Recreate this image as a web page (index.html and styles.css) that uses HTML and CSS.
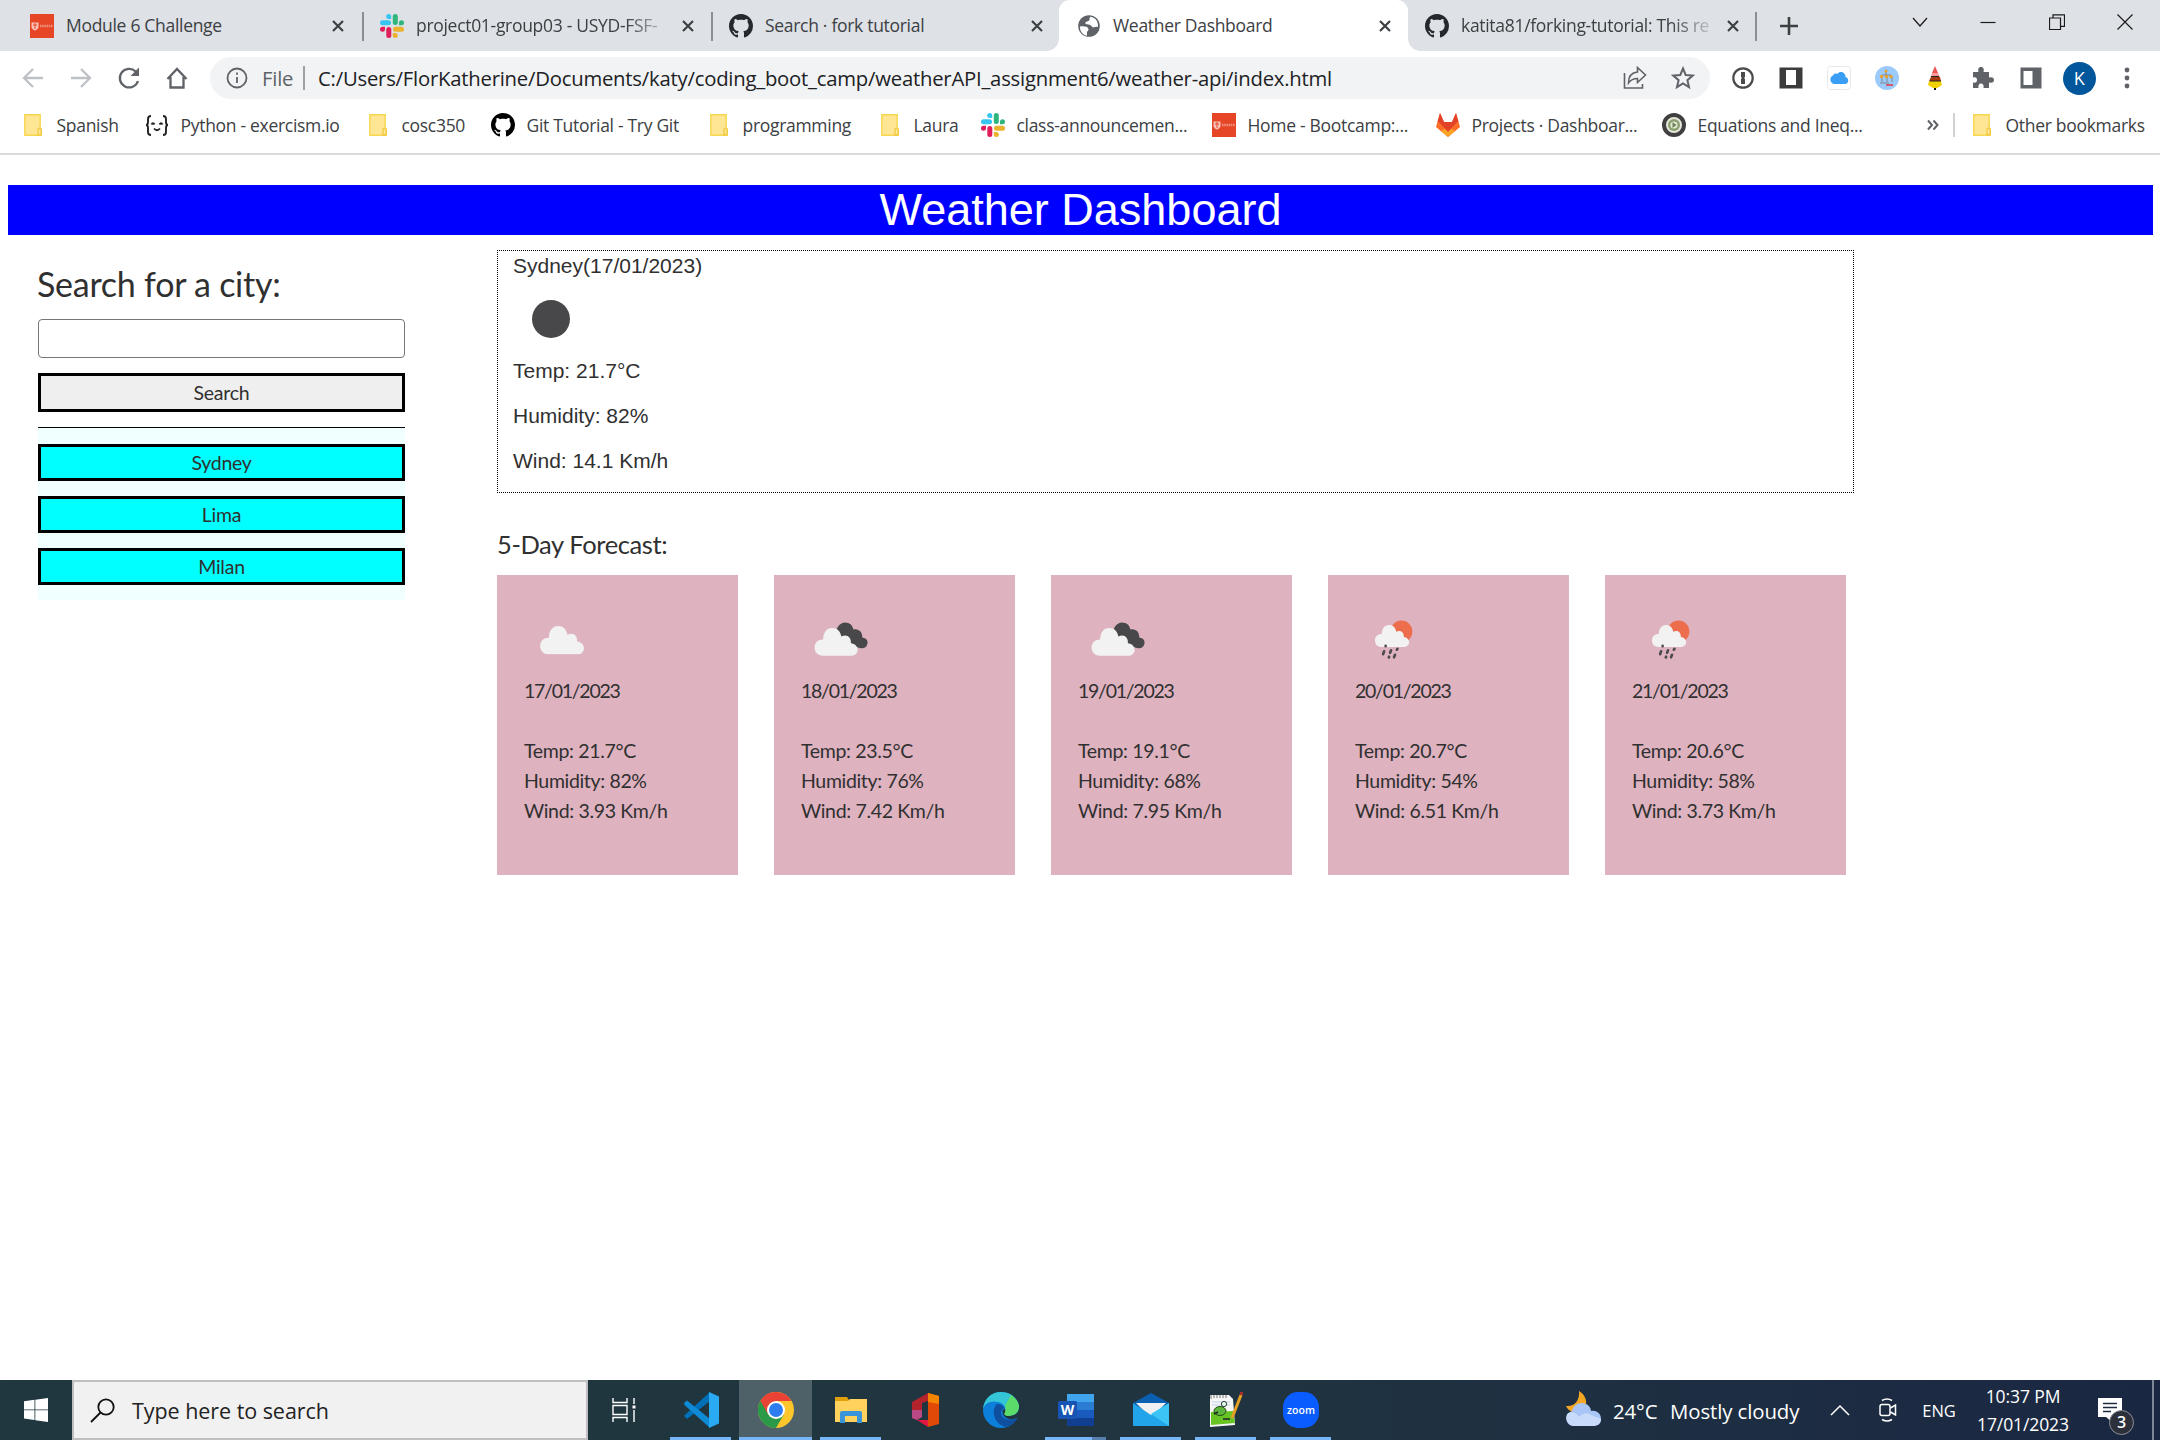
FILE: index.html
```
<!DOCTYPE html>
<html lang="en">
<head>
<meta charset="utf-8">
<title>Weather Dashboard</title>
<link rel="stylesheet" href="styles.css">
</head>
<body>
<svg class="defs" aria-hidden="true">
  <symbol id="github" viewBox="0 0 16 16"><path d="M8 0C3.58 0 0 3.58 0 8c0 3.54 2.29 6.53 5.47 7.59.4.07.55-.17.55-.38 0-.19-.01-.82-.01-1.49-2.01.37-2.53-.49-2.69-.94-.09-.23-.48-.94-.82-1.13-.28-.15-.68-.52-.01-.53.63-.01 1.08.58 1.23.82.72 1.21 1.87.87 2.33.66.07-.52.28-.87.51-1.07-1.78-.2-3.64-.89-3.64-3.95 0-.87.31-1.59.82-2.15-.08-.2-.36-1.02.08-2.12 0 0 .67-.21 2.2.82.64-.18 1.32-.27 2-.27s1.36.09 2 .27c1.53-1.04 2.2-.82 2.2-.82.44 1.1.16 1.92.08 2.12.51.56.82 1.27.82 2.15 0 3.07-1.87 3.75-3.65 3.95.29.25.54.73.54 1.48 0 1.07-.01 1.93-.01 2.2 0 .21.15.46.55.38A8.01 8.01 0 0 0 16 8c0-4.42-3.58-8-8-8z"/></symbol>
  <symbol id="slack" viewBox="0 0 24 24"><g fill="#36c5f0"><rect y="6.3" width="11" height="5" rx="2.5"/><path d="M8.7 0a2.5 2.5 0 0 1 2.5 2.5V5H8.7a2.5 2.5 0 0 1 0-5z"/></g><g fill="#2eb67d"><rect x="12.8" width="5" height="11" rx="2.5"/><path d="M24 8.7a2.5 2.5 0 0 1-2.5 2.5H19V8.7a2.5 2.5 0 0 1 5 0z"/></g><g fill="#ecb22e"><rect x="13" y="12.8" width="11" height="5" rx="2.5"/><path d="M15.3 24a2.5 2.5 0 0 1-2.5-2.5V19h2.5a2.5 2.5 0 0 1 0 5z"/></g><g fill="#e01e5a"><rect x="6.3" y="13" width="5" height="11" rx="2.5"/><path d="M0 15.3a2.5 2.5 0 0 1 2.5-2.5H5v2.5a2.5 2.5 0 0 1-5 0z"/></g></symbol>
  <symbol id="usyd" viewBox="0 0 24 24"><path fill="#e64626" d="M0 0h24v24H0z"/><path d="M1.500 8.500h7v4.200c0 2-1.600 3-3.500 3.800-1.900-.8-3.500-1.800-3.500-3.800z" fill="#f6c3b8"/><path d="M3 11h4M5 9v6" stroke="#e64626"/><path d="M10 12h13" stroke="#f0907c" stroke-width="2.500" stroke-dasharray="1.500 .7"/></symbol>
  <symbol id="folder" viewBox="0 0 18 22"><path d="M.8.8h15.400v14.400h1v6H.8z" fill="#ffe694" stroke="#f8d64e" stroke-width="1.400"/><path d="M14 21v-5.300q0-1.500 1.600-1.500t1.600 1.500V19q0 2-2 2z" fill="#ffe694" stroke="#eec73b" stroke-width="1.200"/></symbol>
  <symbol id="close" viewBox="0 0 12 12"><path d="M1 1l10 10M11 1L1 11" stroke="#3c4043" stroke-width="2.200"/></symbol>
  <symbol id="cloud" viewBox="0 0 46 30"><path d="M9 29.500C4 29.500.5 26 .5 21S4 12.500 9.500 12.500C9.500 5.500 13 .5 19 .5c5 0 8.700 3.500 9.500 9 6-3 10.500 1 10 7 4 .5 7 3 7 7 0 3.500-3 6-6.500 6z" fill="#f2f2f2"/></symbol>
  <symbol id="broken" viewBox="0 0 241 102"><path d="M61 70c-1-12 1-21 9-22 6 0 8 3 9 7 6-1 9 3 9 8 5 1 6 4 5 7-1 4-5 5-10 3z" fill="#48484a"/><svg x="38.500" y="53" width="46" height="29"><use href="#cloud"/></svg></symbol>
  <symbol id="rain" viewBox="0 0 241 102"><circle cx="73" cy="57" r="11" fill="#ec6e4c"/><svg x="45" y="50" width="37" height="23"><use href="#cloud"/></svg><path d="M57 71.500v.5M55.500 77l-1 3M62.500 76l-1 2.500M69 74.500l-.7 1M60.500 82.500l-.3.800M66.500 80.500l-1 2.500" stroke="#4a494b" stroke-width="2.600" stroke-linecap="round"/></symbol>
</svg>

<header class="browser">
  <div class="tabs">
    <div class="tab"><svg class="fav"><use href="#usyd"/></svg><span class="label">Module 6 Challenge</span><svg class="x"><use href="#close"/></svg></div>
    <div class="tab"><svg class="fav"><use href="#slack"/></svg><span class="label fade">project01-group03 - USYD-FSF-</span><svg class="x"><use href="#close"/></svg></div>
    <div class="tab plain"><svg class="fav dark"><use href="#github"/></svg><span class="label">Search · fork tutorial</span><svg class="x"><use href="#close"/></svg></div>
    <div class="tab active"><svg class="fav" viewBox="0 0 24 24"><circle cx="12" cy="12" r="10.800" fill="#5f6368"/><path d="M3 12.500c4-.5 8 0 8.500 2.500.3 2-2 2-1.500 4.500v2.200C5 20.500 2.800 17 3 12.500zM13 2.800c-1 2 .5 2.700-1.500 4.200-2 1-3.500.5-3 2.500.5 1.500 5 .5 6 2.500.5 1.500 2 1.500 3.500 1 1.500-.3 2.500-.3 3 0C21.500 7 18 3.300 13 2.800z" fill="#fff"/></svg><span class="label">Weather Dashboard</span><svg class="x"><use href="#close"/></svg></div>
    <div class="tab"><svg class="fav dark"><use href="#github"/></svg><span class="label fade">katita81/forking-tutorial: This re</span><svg class="x"><use href="#close"/></svg></div>
    <div class="newtab"><svg width="18" height="18" viewBox="0 0 18 18"><path d="M9 0v18M0 9h18" stroke="#3c4043" stroke-width="2.600"/></svg></div>
    <div class="winbtns">
      <svg viewBox="0 0 16 16"><path d="M1 4l7 8 7-8" /></svg>
      <svg viewBox="0 0 16 16"><path d="M.5 8.500h15"/></svg>
      <svg viewBox="0 0 16 16"><path d="M.5 4h11v11.500H.5zM4 4V.8h11.500v11.500H12"/></svg>
      <svg viewBox="0 0 16 16"><path d="M.5.5l15 15M15.500.5l-15 15"/></svg>
    </div>
  </div>

  <div class="toolbar">
    <div class="nav">
      <svg class="off" viewBox="0 0 24 24"><path d="M22 12H4M12 3l-9 9 9 9"/></svg>
      <svg class="off" viewBox="0 0 24 24"><path d="M2 12h18M12 3l9 9-9 9"/></svg>
      <svg viewBox="0 0 24 24"><path d="M21 15a9.300 9.300 0 1 1-2.300-9.500L21 8"/><path d="M22 1.500v8.500h-8.500z" fill="#5f6368" stroke="none"/></svg>
      <svg viewBox="0 0 24 24"><path d="M2.500 13L12 3l9.500 10M5.500 11v10.500h13V11"/></svg>
    </div>
    <div class="omnibox">
      <svg class="info" viewBox="0 0 22 22"><circle cx="11" cy="11" r="9.500"/><path d="M11 10v6M11 5.500v2.300"/></svg>
      <span class="scheme">File</span>
      <span class="url">C:/Users/FlorKatherine/Documents/katy/coding_boot_camp/weatherAPI_assignment6/weather-api/index.html</span>
      <svg class="act" viewBox="0 0 24 24"><path d="M1.500 7v15h18v-4"/><path d="M14.500 1.500l8 7.500-8 7.500v-4c-4 0-6.500 1-9 4.500 0-6 3-10.500 9-11z"/></svg>
      <svg class="act" viewBox="0 0 24 24"><path d="M12 2.500l2.700 6.500 7 .6-5.300 4.600 1.600 6.900-6-3.700-6 3.700 1.600-6.900L2.300 9.600l7-.6z" stroke-width="2"/></svg>
    </div>
    <div class="exts">
      <svg viewBox="0 0 24 24"><circle cx="12" cy="12" r="9.700" fill="#fff" stroke="#4a4a4a" stroke-width="2.200"/><path d="M10 6h4v5l-1 1 1 1v5h-4v-5l1-1-1-1z" fill="#4a4a4a"/></svg>
      <svg viewBox="0 0 24 24"><path d="M.5 1.500h23v21H.5z" fill="#3c3c3c"/><path d="M7 4h10v15H7z" fill="#fff"/></svg>
      <svg viewBox="0 0 24 24"><rect x=".5" y=".5" width="23" height="23" rx="3" fill="#fff" stroke="#e8e8e8"/><path d="M7 18a4.500 4.500 0 0 1-1-8.500c1-2 3-2.500 4.500-1.500 2-3.500 8-2 8 3 4 1 3.500 7-.5 7z" fill="#3b9ef5"/></svg>
      <svg viewBox="0 0 24 24"><circle cx="12" cy="12" r="12" fill="#9bcbfb"/><path d="M11 5v5M7 11v5M12 11v5M17 11v5M7 9h9M5 17h9" stroke="#7d8593" stroke-width="1" fill="none"/><g fill="#e9a02c"><circle cx="11" cy="5" r="1.500"/><circle cx="6.500" cy="10.500" r="1.700"/><circle cx="11.500" cy="10.500" r="1.700"/><circle cx="16" cy="10.500" r="1.700"/></g><path d="M11 19h7" stroke="#d45b6a" stroke-width="2"/></svg>
      <svg viewBox="0 0 24 24"><path d="M11 21h2v3h-2z" fill="#111"/><path d="M12 0l3 7H9z" fill="#e55"/><path d="M9 7h6l2 4H8z" fill="#f99"/><path d="M8 11h9l1 4H6z" fill="#a63a12"/><path d="M6 15h12l1 4-5 3h-4l-5-3z" fill="#f0d000"/><path d="M8 10.500h8M7 15h11" stroke="#222"/></svg>
      <svg viewBox="0 0 24 24"><path d="M2 6h5.500C6.500 2.500 8 1 10 1s3.500 1.500 2.500 5H18v5.500c3.500-1 5 .5 5 2.500s-1.500 3.500-5 2.500V22h-5.500c.5-3-.5-4.500-2.500-4.500S7 19 7.500 22H2v-5.500c3 .5 4-.5 4-2.500s-1-3-4-2.500z" fill="#5f6368"/></svg>
      <svg viewBox="0 0 24 24"><path d="M1.500 1.500h21v21h-21z" fill="#5f6368"/><path d="M4.500 5h9v14h-9z" fill="#fff"/></svg>
      <span class="avatar">K</span>
      <svg viewBox="0 0 24 24"><g fill="#5f6368"><circle cx="12" cy="4" r="2.400"/><circle cx="12" cy="12" r="2.400"/><circle cx="12" cy="20" r="2.400"/></g></svg>
    </div>
  </div>

  <nav class="bookmarks">
    <span><svg class="fo"><use href="#folder"/></svg>Spanish</span>
    <span><svg viewBox="0 0 24 24"><path d="M6 3Q3 3 3 6v3q0 3-2 3 2 0 2 3v4q0 3 3 3M18 3q3 0 3 3v3q0 3 2 3-2 0-2 3v4q0 3-3 3M6.500 11.500q1.500-2.500 3 0M14.500 11.500q1.500-2.500 3 0M9 15.500q3 3.500 6 0" fill="none" stroke="#222" stroke-width="1.900"/></svg>Python - exercism.io</span>
    <span><svg class="fo"><use href="#folder"/></svg>cosc350</span>
    <span><svg><use href="#github"/></svg>Git Tutorial - Try Git</span>
    <span><svg class="fo"><use href="#folder"/></svg>programming</span>
    <span><svg class="fo"><use href="#folder"/></svg>Laura</span>
    <span><svg><use href="#slack"/></svg>class-announcemen...</span>
    <span><svg><use href="#usyd"/></svg>Home - Bootcamp:...</span>
    <span><svg viewBox="0 0 24 24"><path d="M12 24L0 14 4 0l4 9h8l4-9 4 14z" fill="#fc6d26"/><path d="M12 24L8 9h8z" fill="#e24329"/><path d="M4 0l4 9H1.500zM20 0l-4 9h6.500z" fill="#e24329"/><path d="M12 24l-7-6 7-4 7 4z" fill="#fca326"/><path d="M12 19L3 9h18z" fill="#e24329"/></svg>Projects · Dashboar...</span>
    <span><svg viewBox="0 0 24 24"><circle cx="12" cy="12" r="10" fill="#e6e6dc" stroke="#404040" stroke-width="4"/><circle cx="12" cy="12" r="6" fill="#8aa070"/><circle cx="12" cy="12" r="3.600" fill="#e3ead8"/><path d="M10.500 9l4 3-4 3z" fill="#6d8355"/></svg>Equations and Ineq...</span>
    <b><svg width="12" height="12" viewBox="0 0 12 12"><path d="M1 1.500L5 6l-4 4.500M6.500 1.500l4 4.500-4 4.500" fill="none" stroke="#5f6368" stroke-width="2"/></svg></b>
    <span class="other"><svg class="fo"><use href="#folder"/></svg>Other bookmarks</span>
  </nav>
</header>

<main class="page">
  <h1 class="banner">Weather Dashboard</h1>
  <div class="content">
    <aside class="side">
      <h2>Search for a city:</h2>
      <input type="text" class="city">
      <button class="search">Search</button>
      <div class="history">
        <button>Sydney</button>
        <button>Lima</button>
        <button>Milan</button>
      </div>
    </aside>
    <section class="results">
      <div class="today">
        <p>Sydney(17/01/2023)</p>
        <svg class="moon" viewBox="0 0 75 75"><circle cx="38" cy="38" r="19" fill="#48484a"/></svg>
        <p>Temp: 21.7°C</p>
        <p>Humidity: 82%</p>
        <p>Wind: 14.1 Km/h</p>
      </div>
      <h3>5-Day Forecast:</h3>
      <div class="cards">
        <div class="card"><svg class="wx" viewBox="0 0 241 102"><svg x="41.500" y="51" width="46" height="29.500"><use href="#cloud"/></svg></svg><p class="date">17/01/2023</p><p>Temp: 21.7°C</p><p>Humidity: 82%</p><p>Wind: 3.93 Km/h</p></div>
        <div class="card"><svg class="wx"><use href="#broken"/></svg><p class="date">18/01/2023</p><p>Temp: 23.5°C</p><p>Humidity: 76%</p><p>Wind: 7.42 Km/h</p></div>
        <div class="card"><svg class="wx"><use href="#broken"/></svg><p class="date">19/01/2023</p><p>Temp: 19.1°C</p><p>Humidity: 68%</p><p>Wind: 7.95 Km/h</p></div>
        <div class="card"><svg class="wx"><use href="#rain"/></svg><p class="date">20/01/2023</p><p>Temp: 20.7°C</p><p>Humidity: 54%</p><p>Wind: 6.51 Km/h</p></div>
        <div class="card"><svg class="wx"><use href="#rain"/></svg><p class="date">21/01/2023</p><p>Temp: 20.6°C</p><p>Humidity: 58%</p><p>Wind: 3.73 Km/h</p></div>
      </div>
    </section>
  </div>
</main>

<footer class="taskbar">
  <div class="start"><svg width="24" height="24" viewBox="0 0 24 24"><path d="M0 3.300l10.500-1.500v9.700H0zM11.300 1.700L24 0v11.500H11.300zM0 12.300h10.500v9.700L0 20.600zM11.300 12.300H24V24l-12.700-1.800z" fill="#fff"/></svg></div>
  <div class="find"><svg width="25" height="25" viewBox="0 0 25 25"><circle cx="16" cy="9" r="7.700"/><path d="M10.500 14.500L1 24"/></svg>Type here to search</div>
  <div class="taskview"><svg width="24" height="24" viewBox="0 0 24 24"><path d="M1 0v4.500h14V0M1 24v-4.500h14V24M1 7.500h14v9H1zM22 0v6M22 12v12" fill="none" stroke="#fff" stroke-width="1.400"/><path d="M20.500 7.500h3v3h-3z" fill="#fff"/></svg></div>
  <div class="apps">
    <div class="app run"><svg viewBox="0 0 36 36"><path d="M1 24l3 3 23-18V0L1.500 23.300z" fill="#0070b8"/><path d="M1 11l3-2.500L27 27v9L1.500 13z" fill="#0e8ad6"/><path d="M26 0l10 4.500v27L26 36z" fill="#2aaaf3"/></svg></div>
    <div class="app run on"><svg viewBox="0 0 36 36"><circle cx="18" cy="18" r="18" fill="#ffc62c"/><path d="M18 18L2.400 9A18 18 0 0 0 18 36l7.800-13.500z" fill="#2a9a48"/><path d="M2.400 9A18 18 0 0 1 33.600 9H18L10.200 22.500z" fill="#ea4335"/><circle cx="18" cy="18" r="9" fill="#fff"/><circle cx="18" cy="18" r="7" fill="#2d7df0"/></svg></div>
    <div class="app run"><svg viewBox="0 0 36 36"><path d="M2 5h12l2 3v4H2z" fill="#e0a00c"/><path d="M2 9h13l2-2h17v23H2z" fill="#ffd25e"/><path d="M7 31V21q0-2 2-2h18q2 0 2 2v10h-5v-7H12v7z" fill="#3a94da"/></svg></div>
    <div class="app"><svg viewBox="0 0 36 36"><path d="M20 1v8l-6 2v14l-5 3-5-2V10z" fill="#b3232b"/><path d="M4 18v8l5 2 5-3v-7z" fill="#b94a86"/><path d="M9 28h11v7z" fill="#e3173f"/><path d="M20 1l11 3v28l-11 3z" fill="#e04a06"/><path d="M20 1l11 3v8l-11-2z" fill="#f58500"/></svg></div>
    <div class="app"><svg viewBox="0 0 36 36"><circle cx="18" cy="18" r="18" fill="#0c7fda"/><path d="M0 17C1 7 8 0 18 0c11 0 18 8 18 15 0 6-5 9-10 9-4 0-6-1-5-3 3-4 1-9-6-11C8 8 2 11 0 17z" fill="#34c5d6"/><path d="M28 3c6 4 8 9 8 12 0 6-5 9-10 9-4 0-6-1-5-3 2-3 2-5 1-7z" fill="#5bdc6a"/><path d="M14 12c-6 5-4 20 9 23 5-1 9-4 11-9-6 3-16 2-16-5 0-4 2-4 3-5-1-3-4-4-7-4z" fill="#0f4f9e"/><path d="M36 16v10h-2.500c-6 3-14 0-14-6 0-2 1-3 2-3.500 1 2 1 3 0 4.500-1 2 1 3 5 3 5 0 9-3 9.500-8z" fill="#20353f"/></svg></div>
    <div class="app run split"><svg viewBox="0 0 36 36"><path d="M9 2h27v8H9z" fill="#41a5ee"/><path d="M9 10h27v8H9z" fill="#2b7cd3"/><path d="M9 18h27v8H9z" fill="#185abd"/><path d="M9 26h27v8H9z" fill="#103f91"/><rect y="9" width="19" height="18" rx="1.500" fill="#1854b4"/><text x="9.500" y="23" text-anchor="middle" class="w">W</text></svg></div>
    <div class="app run"><svg viewBox="0 0 36 36"><path d="M0 11L18 1l18 10-18 14z" fill="#0a5fb0"/><path d="M3 11h30L18 26z" fill="#f0f0f2"/><path d="M0 11l18 12L36 11v23H0z" fill="#22a4ea"/><path d="M18 22L36 11v23z" fill="#3cc4f7"/></svg></div>
    <div class="app run"><svg viewBox="0 0 36 36"><path d="M2 3h19l4 4 2 26-25 2z" fill="#f6f6f6"/><path d="M3 20l22-1 2 12-24 2z" fill="#68c422"/><path d="M3 3v4M6 3v3M9 3v3M12 3v3M15 3v3M18 3v3" stroke="#777"/><path d="M4 10h18M4 13h18" stroke="#bcd3e8"/><ellipse cx="12" cy="19" rx="6" ry="4.500" fill="#5cb53c" stroke="#254d18"/><circle cx="16" cy="12" r="2.600" fill="#dfe" stroke="#333"/><path d="M6 22l4-2M15 27h7" stroke="#222" stroke-width="1.500"/><path d="M24 26L33 3" stroke="#e5a023" stroke-width="3"/><path d="M33 3l1-3" stroke="#b03030" stroke-width="3"/></svg></div>
    <div class="app run"><svg viewBox="0 0 36 36"><rect width="36" height="36" rx="15" fill="#0b5cff"/><text x="18" y="21.500" text-anchor="middle" class="z">zoom</text></svg></div>
  </div>
  <div class="tray">
    <svg width="36" height="36" viewBox="0 0 36 36"><path d="M14 0c7 4 10 13 4 19-5 4-14 3-17-4 8 1 14-5 13-15z" fill="#f5a623"/><path d="M8 35a8 8 0 0 1-1-15c1-5 5-8 10-8s9 4 9 8c5-1 10 2 10 8 0 5-4 7-8 7z" fill="#a9c5f5"/><path d="M8 35a8 8 0 0 1-5-13c4-2 9 0 11 4 3-4 9-5 12-2l10 4c0 5-4 7-8 7z" fill="#c9dbfb"/></svg>
    <span class="wt">24°C</span>
    <span class="wt">Mostly cloudy</span>
    <svg class="c line" width="20" height="14" viewBox="0 0 20 14"><path d="M1 12l9-9 9 9"/></svg>
    <svg class="c line" width="20" height="24" viewBox="0 0 20 24"><rect x="2" y="6.500" width="10" height="11" rx="2"/><path d="M12.500 10l5-3v10l-5-3M4 2.500q5-3 10 0M4 21.500q5 3 10 0"/></svg>
    <span class="sm">ENG</span>
    <div class="clock">10:37 PM<br>17/01/2023</div>
    <div class="note"><svg width="24" height="24" viewBox="0 0 24 24"><path d="M0 0h24v19H14v5l-6-5H0z" fill="#fff"/><path d="M5 5.500h14M5 9.500h14M5 13.500h8" stroke="#1c2a42" stroke-width="1.400"/></svg><span class="badge">3</span></div>
  </div>
</footer>
</body>
</html>
```
FILE: styles.css
```
* { box-sizing: border-box; }
body {
  margin: 0;
  height: 1440px;
  display: flex;
  flex-direction: column;
  background: #fff;
  font-family: "Open Sans", sans-serif;
  overflow: hidden;
}
p, h1, h2, h3 { margin: 0; font-weight: 400; }
svg { display: block; flex: none; }
.defs { position: absolute; width: 0; height: 0; }

/* Browser chrome */
.browser { font-size: 17.500px; letter-spacing: -.3px; color: #3c4043; }
.tabs {
  height: 51px;
  padding-left: 14px;
  background: #dee1e6;
  display: grid;
  grid-template-columns: 350px 349px 346px 349px 349px 1fr auto;
}
.tab { position: relative; display: flex; align-items: center; padding-left: 16px; }
.tab::after { content: ""; position: absolute; right: 0; top: 12px; width: 2px; height: 29px; background: #8b8f94; }
.tab.plain::after { display: none; }
.tab .fav { width: 24px; height: 24px; }
.dark { fill: #24292f; }
.label { width: 256px; margin: 0 8px 0 12px; white-space: nowrap; line-height: 28px; padding-bottom: 1px; }
.fade { -webkit-mask-image: linear-gradient(90deg, #000 210px, transparent 258px); mask-image: linear-gradient(90deg, #000 210px, transparent 258px); }
.x { width: 12px; height: 12px; margin-left: 2px; }
.tab.active { background: #fff; border-radius: 11px 11px 0 0; padding-left: 18px; }
.tab.active::before, .tab.active::after {
  content: ""; position: absolute; top: auto; bottom: 0; width: 12px; height: 12px;
}
.tab.active::before { left: -12px; background: radial-gradient(circle at 0 0, #dee1e6 11.500px, #fff 12px); }
.tab.active::after { right: -12px; background: radial-gradient(circle at 100% 0, #dee1e6 11.500px, #fff 12px); }
.tab:nth-child(5) { padding-left: 17px; }
.newtab { display: flex; align-items: center; padding-left: 23px; }
.winbtns { display: flex; gap: 52.500px; padding: 14px 27px 0 0; }
.winbtns svg { width: 16px; height: 16px; fill: none; stroke: #1a1a1a; stroke-width: 1.200; }

.toolbar { height: 54px; display: flex; align-items: center; padding: 0 21px 0 21px; }
.nav { display: flex; gap: 24px; width: 189px; }
.nav svg { width: 24px; height: 24px; fill: none; stroke: #5f6368; stroke-width: 2.300; }
.nav .off { stroke: #bdc1c6; }
.omnibox { width: 1500px; height: 42px; border-radius: 21px; background: #f1f3f4; display: flex; align-items: center; padding-left: 16px; font-size: 20.300px; letter-spacing: -.22px; }
.info { width: 22px; height: 22px; fill: none; stroke: #5f6368; stroke-width: 1.800; }
.scheme { width: 43px; margin-left: 14px; line-height: 24px; color: #5f6368; border-right: 2px solid #9aa0a6; }
.url { flex: 1; margin-left: 13px; color: #202124; white-space: nowrap; }
.act { width: 24px; height: 24px; margin-right: 24px; fill: none; stroke: #5f6368; stroke-width: 1.600; }
.act:last-child { margin-right: 15px; }
.exts { display: flex; gap: 24px; align-items: center; margin-left: 21px; }
.exts svg { width: 24px; height: 24px; }
.avatar { width: 33px; height: 33px; margin: 0 -4.500px; border-radius: 50%; background: #02569b; color: #fff; text-align: center; line-height: 33px; font-size: 18px; }

.bookmarks {
  height: 50px;
  padding: 0 0 8px 24px;
  border-bottom: 2px solid #d9d9d9;
  display: grid;
  grid-template-columns: 121px 224px 122px 219px 171px 100px 231px 224px 226px 265px 26px 1fr;
  align-items: center;
}
.bookmarks span { display: flex; align-items: center; gap: 11.500px; white-space: nowrap; }
.bookmarks svg { width: 24px; height: 24px; }
.bookmarks .fo { width: 18px; height: 22px; margin-right: 3px; }
.bookmarks b svg { width: 12px; height: 12px; }
.bookmarks .other { height: 24px; padding-left: 18px; border-left: 2px solid #d0d3d6; }

/* Weather page */
.page { flex: 1; padding: 30px 7px 0 8px; color: #303030; font-family: Lato, sans-serif; }
.banner { height: 50px; background: #00f; color: #fff; font: 45px/50px "Liberation Sans", sans-serif; text-align: center; }
.content { display: flex; }
.side { width: 397px; padding: 29px 0 0 30px; display: flex; flex-direction: column; }
.side h2 { font-size: 34px; line-height: 40px; letter-spacing: -.25px; margin-left: -1px; }
.city { height: 39px; margin-top: 15px; border: 1px solid #767676; border-radius: 4px; background: #fff; }
.side button { font: 19.500px/24px Lato, sans-serif; letter-spacing: -.25px; color: #303030; border: 3px solid #000; border-radius: 0; padding: 0; }
.side .search { height: 39px; margin: 15px 0; background: #efefef; }
.history { display: flex; flex-direction: column; gap: 15px; padding: 16px 0 15px; border-top: 1px solid #000; background: #f0ffff; }
.history button { height: 37px; background: #0ff; }
.results { margin-left: 92px; padding-top: 15px; }
.today { width: 1357px; height: 243px; border: 1px dotted #000; padding-left: 15px; font: 21px/30px "Liberation Sans", sans-serif; }
.today p + p { margin-top: 15px; }
.moon { width: 75px; height: 75px; }
.results h3 { margin: 33px 0 13px; font-size: 25.500px; line-height: 36px; letter-spacing: -.4px; }
.cards { display: flex; gap: 36px; }
.card { width: 241px; height: 300px; background: #deb2bf; font-size: 19.500px; line-height: 30px; letter-spacing: -.34px; }
.card p { padding-left: 27px; }
.card .date { margin-bottom: 30px; letter-spacing: -1.250px; }
.wx { width: 241px; height: 101px; }

/* Windows taskbar */
.taskbar { height: 60px; display: flex; background: linear-gradient(90deg, #20373f, #20353f 50%, #1e2f42 75%, #1a2742); color: #fff; }
.start, .taskview { width: 72px; display: flex; align-items: center; justify-content: center; }
.find { width: 516px; border: 2px solid #bfbfbf; background: #f1f1f1; color: #222; display: flex; align-items: center; gap: 17px; padding-left: 16px; font-size: 21.500px; letter-spacing: -.05px; }
.find svg { fill: none; stroke: #111; stroke-width: 1.800; }
.apps { display: flex; margin-left: 3px; }
.app { width: 75px; display: flex; justify-content: center; padding-top: 12px; background: linear-gradient(#76b5f8, #76b5f8) bottom / 0 3px no-repeat; }
.app svg { width: 36px; height: 36px; }
.app.run { background-size: 61px 3px; }
.app.on { width: 73px; margin: 0 1px; background-color: #4e6068; background-size: 73px 3px; }
.app.split { background: linear-gradient(90deg, #76b5f8 47px, #5580b0 47px) bottom / 61px 3px no-repeat; }
.w { font: 700 14px "Open Sans", sans-serif; fill: #fff; }
.z { font: 600 10.500px "Open Sans", sans-serif; fill: #fff; }
.tray { margin-left: auto; margin-right: 6px; display: grid; grid-template-columns: 48px 57px 146px 48px 48px 54px 114px 74px; align-items: center; }
.tray > svg:first-child { margin-bottom: 2px; }
.wt { font-size: 20.400px; letter-spacing: -.1px; padding-top: 2px; }
.c { justify-self: center; }
.line { fill: none; stroke: #fff; stroke-width: 1.500; }
.sm, .clock { font-size: 17.500px; text-align: center; letter-spacing: -.1px; }
.sm { font-size: 16.500px; }
.clock { line-height: 28px; padding-bottom: 1px; }
.note { position: relative; height: 60px; padding: 18px 0 0 18px; border-right: 2px solid #7e8798; }
.badge { position: absolute; left: 29px; top: 30px; width: 25px; height: 25px; border: 1px solid #8a9099; border-radius: 50%; background: #2b303a; font-size: 16px; font-weight: 600; line-height: 22px; text-align: center; }
```
